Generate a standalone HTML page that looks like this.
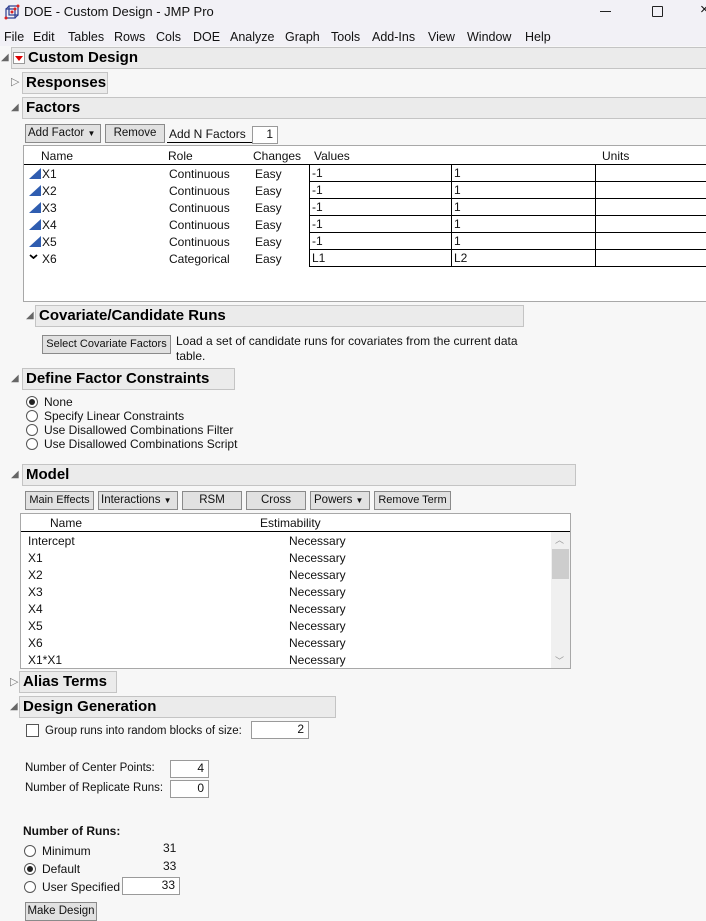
<!DOCTYPE html>
<html><head><meta charset="utf-8">
<style>
*{box-sizing:border-box;margin:0;padding:0}
body{width:706px;height:921px;overflow:hidden;background:#f7f7f7;font-family:"Liberation Sans",sans-serif;font-size:12px;color:#111;position:relative}
.a{position:absolute;white-space:nowrap}
.t{position:absolute;white-space:nowrap;line-height:14px}
.hdr{position:absolute;background:#ebebeb;border:1px solid #c4c4c4;font-weight:bold;font-size:15px;line-height:19px;padding-left:3px;color:#000;white-space:nowrap}
.btn{position:absolute;background:#e1e1e1;border:1px solid #8a8a8a;text-align:center;line-height:17px;font-size:11.5px;white-space:nowrap;overflow:hidden}
.inp{position:absolute;background:#fff;border:1px solid #9a9a9a;text-align:right;padding-right:4px;line-height:15px}
.open{position:absolute;font-size:10px;color:#666;line-height:10px}
.rad{position:absolute;width:12px;height:12px;border:1px solid #555;border-radius:50%;background:#fff}
.rad.on::after{content:"";position:absolute;left:2px;top:2px;width:6px;height:6px;border-radius:50%;background:#222}
.cell{position:absolute;border:1px solid #000;background:#fff;padding-left:2px;padding-top:1px;line-height:15px;height:18px}
</style></head><body>
<div class="a" style="left:0;top:0;width:706px;height:46px;background:#f2f1f6"></div>
<svg class="a" style="left:4px;top:4px" width="16" height="16" viewBox="0 0 16 16"><rect x="2" y="5" width="9" height="9" fill="none" stroke="#2a3b8f" stroke-width="1.2"/><rect x="5" y="2" width="9" height="9" fill="none" stroke="#2a3b8f" stroke-width="1.2"/><line x1="2" y1="5" x2="5" y2="2" stroke="#2a3b8f"/><line x1="11" y1="14" x2="14" y2="11" stroke="#2a3b8f"/><circle cx="2" cy="14" r="1.5" fill="#d22"/><circle cx="14" cy="2" r="1.5" fill="#d22"/><circle cx="8" cy="8" r="1.5" fill="#d22"/><circle cx="11" cy="5" r="1.5" fill="#d22"/></svg>
<div class="t" style="left:24px;top:5px;font-size:13px">DOE - Custom Design - JMP Pro</div>
<div class="a" style="left:600px;top:11px;width:11px;height:1px;background:#222"></div>
<div class="a" style="left:652px;top:6px;width:11px;height:11px;border:1px solid #222;border-radius:1px"></div>
<div class="t" style="left:700px;top:3px;font-size:15px">×</div>
<div class="t" style="left:4px;top:30px;font-size:12.5px">File</div>
<div class="t" style="left:33px;top:30px;font-size:12.5px">Edit</div>
<div class="t" style="left:68px;top:30px;font-size:12.5px">Tables</div>
<div class="t" style="left:114px;top:30px;font-size:12.5px">Rows</div>
<div class="t" style="left:156px;top:30px;font-size:12.5px">Cols</div>
<div class="t" style="left:193px;top:30px;font-size:12.5px">DOE</div>
<div class="t" style="left:230px;top:30px;font-size:12.5px">Analyze</div>
<div class="t" style="left:285px;top:30px;font-size:12.5px">Graph</div>
<div class="t" style="left:331px;top:30px;font-size:12.5px">Tools</div>
<div class="t" style="left:372px;top:30px;font-size:12.5px">Add-Ins</div>
<div class="t" style="left:428px;top:30px;font-size:12.5px">View</div>
<div class="t" style="left:467px;top:30px;font-size:12.5px">Window</div>
<div class="t" style="left:525px;top:30px;font-size:12.5px">Help</div>

<div class="open" style="left:1px;top:53px">◢</div>
<div class="hdr" style="left:11px;top:47px;width:697px;height:22px;padding-left:16px">Custom Design</div>
<div class="a" style="left:13px;top:52px;width:12px;height:12px;border:1px solid #999;background:#fff"></div>
<div class="a" style="left:15px;top:56px;width:0;height:0;border-left:4px solid transparent;border-right:4px solid transparent;border-top:5px solid #d00"></div>

<div class="t" style="left:11px;top:75px;font-size:11px;color:#777">▷</div>
<div class="hdr" style="left:22px;top:72px;width:86px;height:22px">Responses</div>
<div class="open" style="left:11px;top:103px">◢</div>
<div class="hdr" style="left:22px;top:97px;width:686px;height:22px">Factors</div>

<div class="btn" style="left:25px;top:124px;width:76px;height:19px;text-align:left;padding-left:2px">Add Factor <span style="font-size:8px">▼</span></div>
<div class="btn" style="left:105px;top:124px;width:60px;height:19px">Remove</div>
<div class="t" style="left:169px;top:127px">Add N Factors</div>
<div class="a" style="left:167px;top:142px;width:85px;height:1px;background:#000"></div>
<div class="inp" style="left:252px;top:126px;width:26px;height:18px">1</div>

<div class="a" style="left:23px;top:145px;width:690px;height:157px;background:#fff;border:1px solid #a8a8a8"></div>
<div class="t" style="left:41px;top:149px">Name</div>
<div class="t" style="left:168px;top:149px">Role</div>
<div class="t" style="left:253px;top:149px">Changes</div>
<div class="t" style="left:314px;top:149px">Values</div>
<div class="t" style="left:602px;top:149px">Units</div>
<div class="a" style="left:24px;top:164px;width:682px;height:1px;background:#000"></div>

<svg class="a" style="left:28px;top:167px" width="14" height="92" viewBox="0 0 14 92">
<polygon points="1,12 13,12 13,1" fill="#2f5db0"/><polygon points="1,29 13,29 13,18" fill="#2f5db0"/><polygon points="1,46 13,46 13,35" fill="#2f5db0"/><polygon points="1,63 13,63 13,52" fill="#2f5db0"/><polygon points="1,80 13,80 13,69" fill="#2f5db0"/>
<polyline points="2,88 5.5,91 9,88" fill="none" stroke="#000" stroke-width="1.8"/>
</svg>
<div class="t" style="left:42px;top:167px">X1</div><div class="t" style="left:169px;top:167px">Continuous</div><div class="t" style="left:255px;top:167px">Easy</div>
<div class="t" style="left:42px;top:184px">X2</div><div class="t" style="left:169px;top:184px">Continuous</div><div class="t" style="left:255px;top:184px">Easy</div>
<div class="t" style="left:42px;top:201px">X3</div><div class="t" style="left:169px;top:201px">Continuous</div><div class="t" style="left:255px;top:201px">Easy</div>
<div class="t" style="left:42px;top:218px">X4</div><div class="t" style="left:169px;top:218px">Continuous</div><div class="t" style="left:255px;top:218px">Easy</div>
<div class="t" style="left:42px;top:235px">X5</div><div class="t" style="left:169px;top:235px">Continuous</div><div class="t" style="left:255px;top:235px">Easy</div>
<div class="t" style="left:42px;top:252px">X6</div><div class="t" style="left:169px;top:252px">Categorical</div><div class="t" style="left:255px;top:252px">Easy</div>

<div class="cell" style="left:309px;top:164px;width:143px">-1</div><div class="cell" style="left:451px;top:164px;width:145px">1</div><div class="cell" style="left:595px;top:164px;width:120px"></div>
<div class="cell" style="left:309px;top:181px;width:143px">-1</div><div class="cell" style="left:451px;top:181px;width:145px">1</div><div class="cell" style="left:595px;top:181px;width:120px"></div>
<div class="cell" style="left:309px;top:198px;width:143px">-1</div><div class="cell" style="left:451px;top:198px;width:145px">1</div><div class="cell" style="left:595px;top:198px;width:120px"></div>
<div class="cell" style="left:309px;top:215px;width:143px">-1</div><div class="cell" style="left:451px;top:215px;width:145px">1</div><div class="cell" style="left:595px;top:215px;width:120px"></div>
<div class="cell" style="left:309px;top:232px;width:143px">-1</div><div class="cell" style="left:451px;top:232px;width:145px">1</div><div class="cell" style="left:595px;top:232px;width:120px"></div>
<div class="cell" style="left:309px;top:249px;width:143px">L1</div><div class="cell" style="left:451px;top:249px;width:145px">L2</div><div class="cell" style="left:595px;top:249px;width:120px"></div>

<div class="open" style="left:26px;top:311px">◢</div>
<div class="hdr" style="left:35px;top:305px;width:489px;height:22px">Covariate/Candidate Runs</div>
<div class="btn" style="left:42px;top:335px;width:129px;height:19px;font-size:11px">Select Covariate Factors</div>
<div class="t" style="left:176px;top:334px">Load a set of candidate runs for covariates from the current data</div>
<div class="t" style="left:176px;top:349px">table.</div>

<div class="open" style="left:11px;top:374px">◢</div>
<div class="hdr" style="left:22px;top:368px;width:213px;height:22px">Define Factor Constraints</div>
<div class="rad on" style="left:26px;top:396px"></div><div class="t" style="left:44px;top:395px">None</div>
<div class="rad" style="left:26px;top:410px"></div><div class="t" style="left:44px;top:409px">Specify Linear Constraints</div>
<div class="rad" style="left:26px;top:424px"></div><div class="t" style="left:44px;top:423px">Use Disallowed Combinations Filter</div>
<div class="rad" style="left:26px;top:438px"></div><div class="t" style="left:44px;top:437px">Use Disallowed Combinations Script</div>

<div class="open" style="left:11px;top:470px">◢</div>
<div class="hdr" style="left:22px;top:464px;width:554px;height:22px">Model</div>
<div class="btn" style="left:25px;top:491px;width:69px;height:19px;font-size:11px">Main Effects</div>
<div class="btn" style="left:98px;top:491px;width:80px;height:19px;text-align:left;padding-left:2px">Interactions <span style="font-size:8px">▼</span></div>
<div class="btn" style="left:182px;top:491px;width:60px;height:19px">RSM</div>
<div class="btn" style="left:246px;top:491px;width:60px;height:19px">Cross</div>
<div class="btn" style="left:310px;top:491px;width:60px;height:19px;text-align:left;padding-left:3px">Powers <span style="font-size:8px">▼</span></div>
<div class="btn" style="left:374px;top:491px;width:77px;height:19px;font-size:11px">Remove Term</div>

<div class="a" style="left:20px;top:513px;width:551px;height:156px;background:#fff;border:1px solid #a8a8a8"></div>
<div class="t" style="left:50px;top:516px">Name</div>
<div class="t" style="left:260px;top:516px">Estimability</div>
<div class="a" style="left:21px;top:531px;width:549px;height:1px;background:#000"></div>
<div class="a" style="left:551px;top:532px;width:19px;height:136px;background:#f0f0f0"></div>
<div class="a" style="left:552px;top:549px;width:17px;height:30px;background:#cdcdcd"></div>
<div class="t" style="left:555px;top:533px;font-size:9px;color:#999">︿</div>
<div class="t" style="left:555px;top:654px;font-size:9px;color:#999">﹀</div>
<div class="t" style="left:28px;top:534px">Intercept</div><div class="t" style="left:289px;top:534px">Necessary</div>
<div class="t" style="left:28px;top:551px">X1</div><div class="t" style="left:289px;top:551px">Necessary</div>
<div class="t" style="left:28px;top:568px">X2</div><div class="t" style="left:289px;top:568px">Necessary</div>
<div class="t" style="left:28px;top:585px">X3</div><div class="t" style="left:289px;top:585px">Necessary</div>
<div class="t" style="left:28px;top:602px">X4</div><div class="t" style="left:289px;top:602px">Necessary</div>
<div class="t" style="left:28px;top:619px">X5</div><div class="t" style="left:289px;top:619px">Necessary</div>
<div class="t" style="left:28px;top:636px">X6</div><div class="t" style="left:289px;top:636px">Necessary</div>
<div class="t" style="left:28px;top:653px">X1*X1</div><div class="t" style="left:289px;top:653px">Necessary</div>

<div class="t" style="left:10px;top:675px;font-size:11px;color:#777">▷</div>
<div class="hdr" style="left:19px;top:671px;width:98px;height:22px">Alias Terms</div>
<div class="open" style="left:10px;top:702px">◢</div>
<div class="hdr" style="left:19px;top:696px;width:317px;height:22px">Design Generation</div>

<div class="a" style="left:26px;top:724px;width:13px;height:13px;border:1px solid #555;background:#fff"></div>
<div class="t" style="left:45px;top:724px;font-size:11.5px">Group runs into random blocks of size:</div>
<div class="inp" style="left:251px;top:721px;width:58px;height:18px">2</div>

<div class="t" style="left:25px;top:761px;font-size:11.5px">Number of Center Points:</div>
<div class="inp" style="left:170px;top:760px;width:39px;height:18px">4</div>
<div class="t" style="left:25px;top:781px;font-size:11.5px">Number of Replicate Runs:</div>
<div class="inp" style="left:170px;top:780px;width:39px;height:18px">0</div>

<div class="t" style="left:23px;top:824px;font-weight:bold">Number of Runs:</div>
<div class="rad" style="left:24px;top:845px"></div><div class="t" style="left:42px;top:844px">Minimum</div><div class="t" style="left:163px;top:841px">31</div>
<div class="rad on" style="left:24px;top:863px"></div><div class="t" style="left:42px;top:862px">Default</div><div class="t" style="left:163px;top:859px">33</div>
<div class="rad" style="left:24px;top:881px"></div><div class="t" style="left:42px;top:880px">User Specified</div>
<div class="inp" style="left:122px;top:877px;width:58px;height:18px">33</div>
<div class="btn" style="left:25px;top:902px;width:72px;height:19px">Make Design</div>
</body></html>
